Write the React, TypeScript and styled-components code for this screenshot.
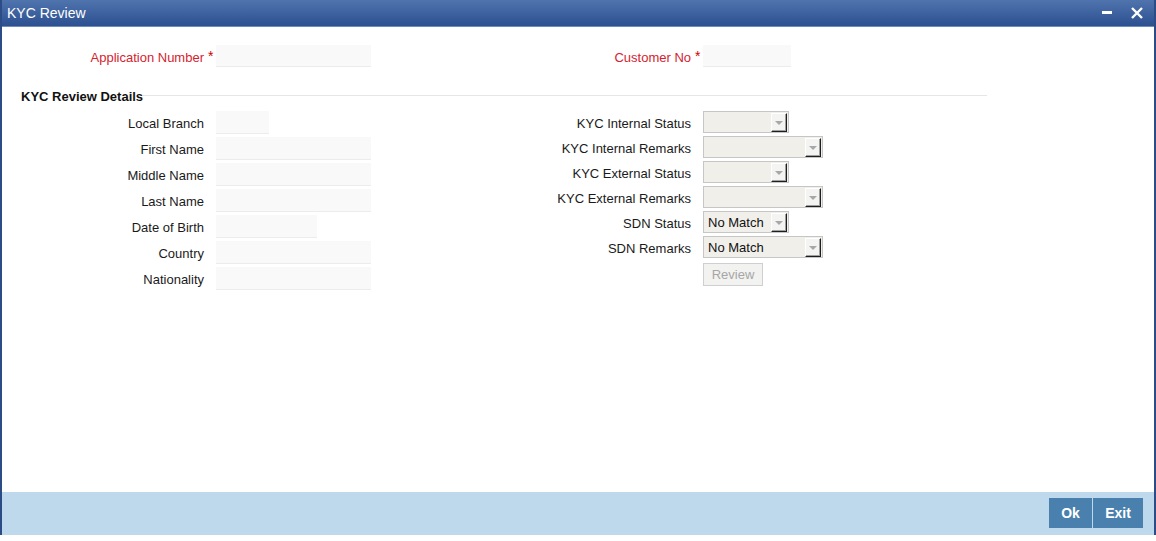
import React from 'react'
import styled, { createGlobalStyle } from 'styled-components'

const GlobalStyle = createGlobalStyle`
    html, body {
        margin: 0;
        padding: 0;
        background: #ffffff;
    }
    body {
        font-family: "Liberation Sans", Arial, sans-serif;
    }
`;

const Window = styled.div`
    width: 1156px;
    height: 535px;
    box-sizing: border-box;
    border-left: 2px solid #2b4c85;
    border-right: 2px solid #2b4c85;
    display: flex;
    flex-direction: column;
    background: #ffffff;
`;

const TitleBar = styled.div`
    height: 26px;
    flex: none;
    background: linear-gradient(to bottom, #4f74ad, #2c5090);
    border-bottom: 1px solid #6d8cba;
    display: flex;
    align-items: center;
    padding: 0 9px 0 5px;
    color: #ffffff;
    font-size: 14px;
`;

const Title = styled.div`
    flex: 1;
`;

const WinButton = styled.div`
    width: 16px;
    height: 16px;
    margin-left: 14px;
    display: flex;
    align-items: center;
    justify-content: center;
`;

const Body = styled.div`
    flex: 1;
    padding-top: 18px;
`;

const Row = styled.div`
    display: flex;
`;

const Block = styled.div<{ $width?: number; $gap: number }>`
    width: ${p => (p.$width ? `${p.$width}px` : 'auto')};
    display: grid;
    grid-template-columns: 202px 12px auto;
    row-gap: ${p => p.$gap}px;
    align-items: center;
    align-content: start;
`;

const Label = styled.div<{ $required?: boolean }>`
    text-align: right;
    font-size: 13px;
    padding-top: 2px;
    color: ${p => (p.$required ? '#d4232f' : '#1a1a1a')};
    white-space: nowrap;
`;

const Star = styled.div`
    color: #cc0000;
    font-size: 14px;
    padding-left: 4px;
    align-self: start;
    margin-top: 3px;
`;

const Field = styled.div<{ $width: number; $height?: number }>`
    width: ${p => p.$width}px;
    height: ${p => p.$height ?? 23}px;
    box-sizing: border-box;
    background: #f9f9f9;
    border-bottom: 1px solid #ececec;
`;

const Section = styled.div`
    display: flex;
    align-items: center;
    margin: 21px 0 7px 19px;
    width: 966px;
    height: 16px;
`;

const SectionTitle = styled.div`
    font-size: 13px;
    font-weight: bold;
    color: #111111;
    white-space: nowrap;
`;

const SectionLine = styled.div`
    flex: 1;
    height: 1px;
    background: #e6e6e6;
    margin-top: -2px;
`;

const SelectBox = styled.div<{ $width: number }>`
    width: ${p => p.$width}px;
    height: 22px;
    box-sizing: border-box;
    border: 1px solid #c6c6c6;
    background: #f0efea;
    display: flex;
    align-items: center;
    padding: 0 1px 0 4px;
    font-size: 13px;
    color: #111111;
`;

const SelectValue = styled.div`
    flex: 1;
    white-space: nowrap;
`;

const ArrowButton = styled.div`
    width: 16px;
    height: 19px;
    box-sizing: border-box;
    background: #f4f4f2;
    border-top: 1px solid #ffffff;
    border-left: 1px solid #ffffff;
    border-right: 1px solid #1e1e1e;
    border-bottom: 1px solid #1e1e1e;
    box-shadow: inset -1px -1px 0 #a0a0a0;
    display: flex;
    align-items: center;
    justify-content: center;
`;

const Arrow = styled.div`
    width: 0;
    height: 0;
    border-left: 4px solid transparent;
    border-right: 4px solid transparent;
    border-top: 4px solid #a8a8a8;
    margin-top: 1px;
`;

const ReviewButton = styled.div`
    width: 60px;
    height: 23px;
    box-sizing: border-box;
    border: 1px solid #cfcfcf;
    background: #f2f2f0;
    color: #a6a6a6;
    font-size: 13px;
    display: flex;
    align-items: center;
    justify-content: center;
    margin-top: 2px;
`;

const Footer = styled.div`
    height: 43px;
    flex: none;
    background: #bfd9ec;
    display: flex;
    justify-content: flex-end;
    align-items: flex-start;
    padding: 6px 11px 0 0;
    box-sizing: border-box;
    gap: 1px;
`;

const FooterButton = styled.div<{ $width: number }>`
    width: ${p => p.$width}px;
    height: 30px;
    background: #4a80ae;
    color: #ffffff;
    font-weight: bold;
    font-size: 14px;
    display: flex;
    align-items: center;
    justify-content: center;
`;

const Select: React.FC<{ width: number; value?: string }> = ({ width, value }) => (
    <SelectBox $width={width}>
        <SelectValue>{value}</SelectValue>
        <ArrowButton><Arrow /></ArrowButton>
    </SelectBox>
);

const leftFields = [
    { label: 'Local Branch', width: 53 },
    { label: 'First Name', width: 155 },
    { label: 'Middle Name', width: 155 },
    { label: 'Last Name', width: 155 },
    { label: 'Date of Birth', width: 101 },
    { label: 'Country', width: 155 },
    { label: 'Nationality', width: 155 },
];

const rightFields = [
    { label: 'KYC Internal Status', width: 86 },
    { label: 'KYC Internal Remarks', width: 120 },
    { label: 'KYC External Status', width: 86 },
    { label: 'KYC External Remarks', width: 120 },
    { label: 'SDN Status', width: 86, value: 'No Match' },
    { label: 'SDN Remarks', width: 120, value: 'No Match' },
];

export default function App() {
    return (
        <>
            <GlobalStyle />
            <Window>
                <TitleBar>
                    <Title>KYC Review</Title>
                    <WinButton>
                        <svg width="10" height="4" viewBox="0 0 10 4">
                            <rect x="0" y="0" width="10" height="3" fill="#ffffff" />
                        </svg>
                    </WinButton>
                    <WinButton>
                        <svg width="12" height="12" viewBox="0 0 12 12">
                            <path d="M1 1 L11 11 M11 1 L1 11" stroke="#ffffff" strokeWidth="2.4" />
                        </svg>
                    </WinButton>
                </TitleBar>
                <Body>
                    <Row>
                        <Block $width={487} $gap={4}>
                            <Label $required>Application Number</Label>
                            <Star>*</Star>
                            <Field $width={155} $height={22} />
                        </Block>
                        <Block $gap={4}>
                            <Label $required>Customer No</Label>
                            <Star>*</Star>
                            <Field $width={88} $height={22} />
                        </Block>
                    </Row>
                    <Section>
                        <SectionTitle>KYC Review Details</SectionTitle>
                        <SectionLine />
                    </Section>
                    <Row>
                        <Block $width={487} $gap={3}>
                            {leftFields.map(f => (
                                <React.Fragment key={f.label}>
                                    <Label>{f.label}</Label>
                                    <span />
                                    <Field $width={f.width} />
                                </React.Fragment>
                            ))}
                        </Block>
                        <Block $gap={3}>
                            {rightFields.map(f => (
                                <React.Fragment key={f.label}>
                                    <Label>{f.label}</Label>
                                    <span />
                                    <Select width={f.width} value={f.value} />
                                </React.Fragment>
                            ))}
                            <span />
                            <span />
                            <ReviewButton>Review</ReviewButton>
                        </Block>
                    </Row>
                </Body>
                <Footer>
                    <FooterButton $width={43}>Ok</FooterButton>
                    <FooterButton $width={50}>Exit</FooterButton>
                </Footer>
            </Window>
        </>
    )
}
